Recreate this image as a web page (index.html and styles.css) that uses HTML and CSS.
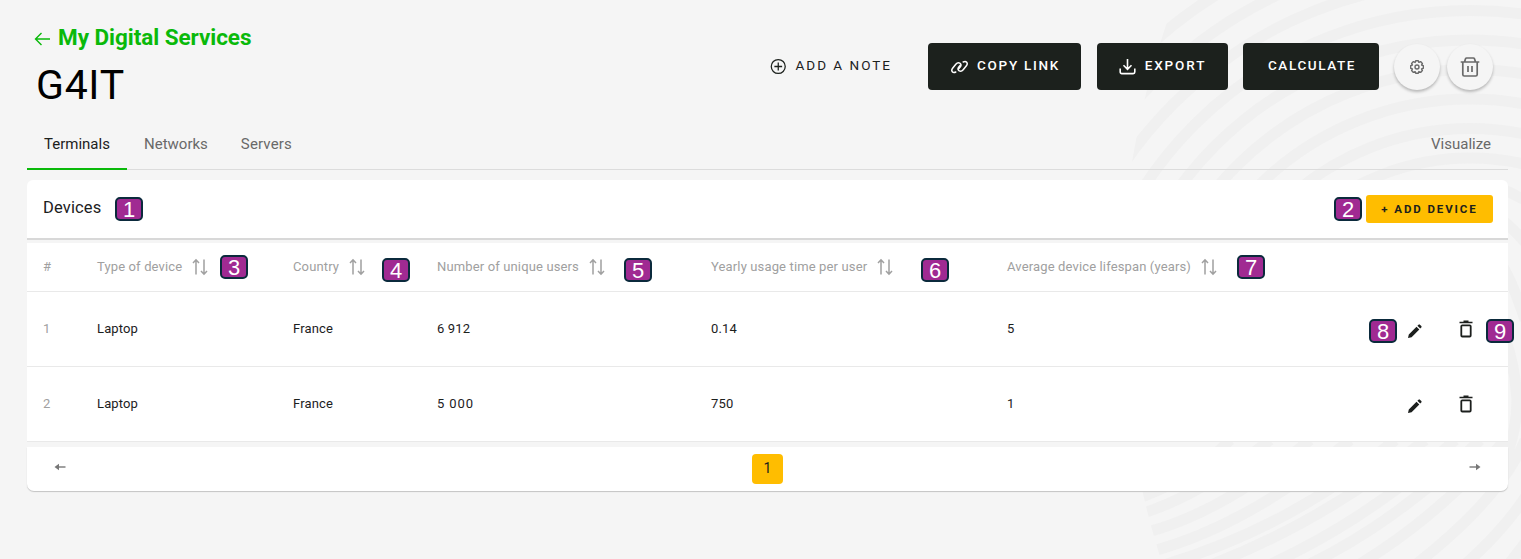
FILE: index.html
```html
<!DOCTYPE html>
<html lang="en">
<head>
<meta charset="utf-8">
<title>G4IT - My Digital Services</title>
<link rel="stylesheet" href="styles.css">
</head>
<body>
<svg class="backdrop" viewBox="0 0 1521 559" width="1521" height="559" aria-hidden="true">
  <defs>
    <clipPath id="disc"><circle cx="1983" cy="300" r="862"/></clipPath>
    <clipPath id="upper"><rect x="1100" y="0" width="421" height="184"/></clipPath>
  </defs>
  <g clip-path="url(#disc)" fill="none" stroke="#f0f0f0" stroke-width="11">
    <g clip-path="url(#upper)" id="rings"></g>
    <path d="M1130 501Q1190 482 1230 440M1130 517Q1195 500 1270 440M1140 534Q1220 515 1310 440M1150 552Q1250 525 1350 440M1150 569Q1290 530 1395 440M1200 569Q1320 525 1425 440M1260 569Q1370 520 1455 440M1310 564Q1400 520 1480 440M1360 564Q1440 515 1505 440M1410 569Q1500 500 1525 440M1460 569Q1505 530 1530 490M1505 569L1535 530M1500 188Q1512 193 1530 203M1500 218Q1515 230 1530 248M1500 262Q1512 280 1525 320M1500 325Q1515 360 1517 400Q1517 430 1505 460"/>
  </g>
</svg>
<svg class="sprite" aria-hidden="true">
  <symbol id="sort" viewBox="0 0 16 18"><path d="M4 16.500V2M1 5l3-3.200L7 5M12 1.500V16M9 13l3 3.200 3-3.200" fill="none" stroke="#a0a0a0" stroke-width="1.500"/></symbol>
  <symbol id="pencil" viewBox="0 0 16 16"><path d="M1 15l.8-3.600 7.700-7.700 2.800 2.800-7.700 7.700zM10.400 2.800l1.100-1.100a1 1 0 0 1 1.400 0l1.400 1.400a1 1 0 0 1 0 1.400l-1.100 1.100z" fill="#1c1f1d"/></symbol>
  <symbol id="bin" viewBox="0 0 14 18"><path d="M.5 2.500h13M4.500 1.200h5" fill="none" stroke="#1c1f1d" stroke-width="1.600"/><rect x="2.300" y="5.300" width="9.400" height="11.200" rx="1" fill="none" stroke="#1c1f1d" stroke-width="1.800"/></symbol>
</svg>
<main class="page">
  <header class="header">
    <div class="heading">
      <a class="back"><svg width="17" height="14" viewBox="0 0 17 14"><path d="M16 7H2M7.500 1L1.500 7l6 6" fill="none" stroke="#0ab90a" stroke-width="1.400"/></svg><span>My Digital Services</span></a>
      <h1 class="title">G4IT</h1>
    </div>
    <div class="actions">
      <button class="btn note"><svg width="17" height="17" viewBox="0 0 17 17"><g fill="none" stroke="#1c211d" stroke-width="1.300"><circle cx="8.500" cy="8.500" r="7.200"/><path d="M8.500 4.500v8M4.500 8.500h8"/></g></svg><span>ADD A NOTE</span></button>
      <button class="btn dark copy"><svg width="17" height="14" viewBox="0 0 17 14"><g fill="none" stroke="#fff" stroke-width="1.500" stroke-linecap="round"><path d="M4.800 12C1.800 13.600-.4 10.800 1.600 8.200L4.800 4.200C7.300 1.200 11.300 3.400 9.500 6.500L7.500 9"/><path d="M12.200 2C15.200.4 17.400 3.200 15.400 5.800L12.200 9.800C9.700 12.800 5.700 10.600 7.500 7.500L9.500 5"/></g></svg><span>COPY LINK</span></button>
      <button class="btn dark export"><svg width="17" height="17" viewBox="0 0 17 17"><path d="M8.500 1v10M4.500 7.300l4 4 4-4M1.200 10.500V14a1.600 1.600 0 0 0 1.600 1.600h11.400a1.600 1.600 0 0 0 1.600-1.600v-3.500" fill="none" stroke="#fff" stroke-width="1.600"/></svg><span>EXPORT</span></button>
      <button class="btn dark calc"><span>CALCULATE</span></button>
      <button class="round"><svg width="16" height="16" viewBox="0 0 16 16"><g fill="none" stroke="#696969" stroke-width="1.400" stroke-linejoin="round"><path d="M6.700 1h2.600l.6 1.700 1.700-.8 1.800 1.800-.8 1.700 1.700.6v2.600l-1.700.6.8 1.700-1.800 1.800-1.700-.8-.6 1.700H6.700l-.6-1.700-1.700.8-1.800-1.800.8-1.700L1.700 8.600V6l1.700-.6-.8-1.700 1.800-1.800 1.700.8z" transform="translate(0 .7)"/><circle cx="8" cy="8" r="2"/></g></svg></button>
      <button class="round"><svg width="20" height="20" viewBox="0 0 20 20"><path d="M.7 5h18.600M4.500 5l1-3.200Q5.800 1 6.700 1h6.600q.9 0 1.200.8l1 3.200M2.800 5v12.500q0 1.500 1.500 1.500h11.400q1.500 0 1.500-1.500V5M8 9v6M12 9v6" fill="none" stroke="#696969" stroke-width="1.700"/></svg></button>
    </div>
  </header>
  <nav class="tabs">
    <a class="tab active">Terminals</a><a class="tab">Networks</a><a class="tab servers">Servers</a><a class="tab visualize">Visualize</a>
  </nav>
  <section class="card">
    <div class="card-head"><h2 class="card-title">Devices</h2><button class="add">+ ADD DEVICE</button></div>
    <div class="table">
      <div class="row head"><span>#</span><span>Type of device<svg class="sort"><use href="#sort"/></svg></span><span>Country<svg class="sort"><use href="#sort"/></svg></span><span>Number of unique users<svg class="sort"><use href="#sort"/></svg></span><span>Yearly usage time per user<svg class="sort"><use href="#sort"/></svg></span><span>Average device lifespan (years)<svg class="sort"><use href="#sort"/></svg></span><span></span></div>
      <div class="row"><span class="num">1</span><span>Laptop</span><span>France</span><span class="wide">6 912</span><span>0.14</span><span>5</span><span class="tools"><svg class="pencil"><use href="#pencil"/></svg><svg class="bin"><use href="#bin"/></svg></span></div>
      <div class="row"><span class="num">2</span><span>Laptop</span><span>France</span><span class="wide thousands">5 000</span><span>750</span><span>1</span><span class="tools"><svg class="pencil"><use href="#pencil"/></svg><svg class="bin"><use href="#bin"/></svg></span></div>
    </div>
    <div class="pager"><svg width="12" height="8" viewBox="0 0 12 8"><path d="M11.500 4H3" stroke="#777" stroke-width="1.400"/><path d="M.5 4L5 .8v6.400z" fill="#777"/></svg><span class="current">1</span><svg width="12" height="8" viewBox="0 0 12 8"><path d="M.5 4H9" stroke="#777" stroke-width="1.400"/><path d="M11.500 4L7 .8v6.400z" fill="#777"/></svg></div>
  </section>
</main>
<span class="badge b1">1</span><span class="badge b2">2</span><span class="badge b3">3</span><span class="badge b4">4</span><span class="badge b5">5</span><span class="badge b6">6</span><span class="badge b7">7</span><span class="badge b8">8</span><span class="badge b9">9</span>
<script src="rings.js"></script>
</body>
</html>
```
FILE: styles.css
```css
* { box-sizing: border-box; }
body { margin: 0; width: 1521px; height: 559px; overflow: hidden; background: #f5f5f5; color: #1c211d; font-family: Roboto, "Liberation Sans", sans-serif; position: relative; }
.backdrop { position: absolute; left: 0; top: 0; }
.sprite { position: absolute; width: 0; height: 0; }
.page { position: relative; padding: 0 13px 0 27px; }
.header { height: 120px; display: flex; justify-content: space-between; }
.heading { padding: 22px 0 0 7px; }
.back { display: flex; align-items: center; height: 30px; gap: 7px; color: #0ab90a; font-size: 22.500px; font-weight: 700; white-space: nowrap; letter-spacing: -0.050px; }
.back svg { margin-top: 3px; }
.title { margin: 8px 0 0 2px; font-size: 41px; line-height: 50px; font-weight: 400; color: #000; letter-spacing: 0.700px; }
.actions { display: flex; padding: 43px 15px 0 0; }
button { font: inherit; border: 0; padding: 0; background: none; color: inherit; }
.btn { height: 47px; display: flex; align-items: center; justify-content: center; gap: 9px; font-size: 13.500px; letter-spacing: 2px; border-radius: 4px; white-space: nowrap; }
.btn span { margin: 0 -2px 3px 0; }
.note { width: 120px; margin-right: 38px; }
.dark { background: #1c211d; color: #fff; font-weight: 500; }
.copy { width: 153px; margin-right: 16px; letter-spacing: 1.700px; }
.export { width: 131px; margin-right: 15px; letter-spacing: 1.900px; }
.export span { margin-right: 0; }
.calc { width: 136px; margin-right: 15px; letter-spacing: 1.600px; }
.round { width: 46px; height: 46px; border-radius: 50%; background: #f5f5f5; margin: 1px 7px 0 0; display: flex; align-items: center; justify-content: center; box-shadow: 0 2px 3px rgba(0,0,0,.25); }
.round:last-child { margin-right: 0; }
.tabs { display: flex; height: 50px; border-bottom: 1px solid #dcdcdc; font-size: 15px; line-height: 48px; color: #696969; }
.tab { height: 50px; padding: 0 17px; white-space: nowrap; }
.servers { padding-left: 16px; letter-spacing: 0.150px; }
.active { width: 100px; color: #1c211d; border-bottom: 2px solid #0ab90a; }
.visualize { margin-left: auto; }
.card { margin-top: 10px; }
.card-head { height: 60px; background: #fff; border-radius: 6px 6px 0 0; border-bottom: 2px solid #d8d8d8; display: flex; justify-content: space-between; padding: 15px 15px 0 16px; }
.card-title { margin: 0; font-size: 16.500px; font-weight: 400; line-height: 26px; letter-spacing: 0.150px; }
.add { width: 127px; height: 28px; border-radius: 3px; background: #ffbd00; font-size: 11.500px; font-weight: 700; letter-spacing: 1.900px; }
.table { margin-top: 3px; }
.row { height: 75px; background: #fff; border-bottom: 1px solid #e9e9e9; padding: 0 11px 0 16px; display: grid; grid-template-columns: 54px 196px 144px 274px 296px 1fr 90px; align-items: center; font-size: 13px; letter-spacing: 0.140px; white-space: nowrap; }
.row > span { padding-bottom: 2px; }
.head { height: 49px; color: #a0a0a0; }
.head > span { display: flex; align-items: center; }
.num { color: #a0a0a0; }
.thousands { letter-spacing: 0.900px; }
.sort { width: 16px; height: 18px; margin: 2px 0 0 10px; flex: none; }
.tools { display: flex; align-items: center; gap: 36px; padding-top: 3px; }
.pencil { width: 16px; height: 16px; margin-top: 2px; }
.bin { width: 14px; height: 18px; margin-bottom: 1px; }
.pager { margin-top: 5px; height: 44px; background: #fff; border-radius: 0 0 7px 7px; box-shadow: 0 1px 1px #c4c4c4; display: flex; justify-content: space-between; align-items: center; padding: 0 27px; }
.pager svg { margin-bottom: 4px; }
.current { width: 31px; height: 30px; border-radius: 4px; background: #ffbd00; font-size: 14px; line-height: 28px; text-align: center; }
.badge { position: absolute; width: 28px; height: 24px; border: 2px solid #0b2a3c; border-radius: 5px; background: #a02a92; color: #fff; font: 22px/21px "Liberation Sans", sans-serif; text-align: center; }
.b1 { left: 115px; top: 197px; }
.b2 { left: 1334px; top: 197px; }
.b3 { left: 220px; top: 255px; }
.b4 { left: 382px; top: 258px; }
.b5 { left: 624px; top: 258px; }
.b6 { left: 921px; top: 258px; }
.b7 { left: 1237px; top: 255px; }
.b8 { left: 1369px; top: 319px; }
.b9 { left: 1486px; top: 319px; }
```
FILE: rings.js
```js
const rings = document.getElementById("rings");
for (let r = 242; r < 620; r += 29.5) {
  const c = document.createElementNS("http://www.w3.org/2000/svg", "circle");
  c.setAttribute("cx", 1470);
  c.setAttribute("cy", 400);
  c.setAttribute("r", r);
  rings.appendChild(c);
}
```
